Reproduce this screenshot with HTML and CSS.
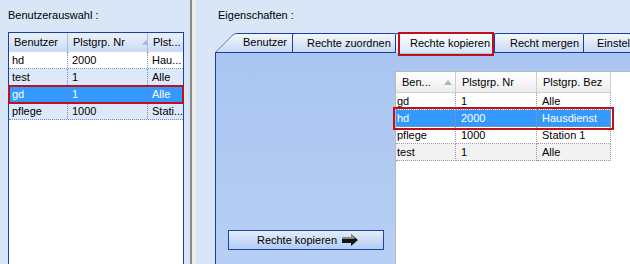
FILE: index.html
```html
<!DOCTYPE html>
<html lang="de">

<head>
    <meta charset="utf-8">
    <meta name="viewport" content="width=device-width, initial-scale=1.0">
    <title>Rechte kopieren</title>
    <link rel="stylesheet" href="styles.css">
</head>

<body>
    <div class="app">
        <section class="pane pane-left">
            <div class="pane-title">Benutzerauswahl :</div>
            <div class="userlist">
                <div class="ul-head">
                    <div class="c1">Benutzer</div>
                    <div class="c2">Plstgrp. Nr
                        <svg class="sort" width="8" height="5" viewBox="0 0 8 5"><path d="M0 5 L4 0 L8 5 Z" fill="#aab9d4"/></svg>
                    </div>
                    <div class="c3">Plst...</div>
                </div>
                <div class="ul-row">
                    <div class="c1">hd</div><div class="c2">2000</div><div class="c3">Hau...</div>
                </div>
                <div class="ul-row alt">
                    <div class="c1">test</div><div class="c2">1</div><div class="c3">Alle</div>
                </div>
                <div class="ul-row sel marked">
                    <div class="c1">gd</div><div class="c2">1</div><div class="c3">Alle</div>
                </div>
                <div class="ul-row alt">
                    <div class="c1">pflege</div><div class="c2">1000</div><div class="c3">Stati...</div>
                </div>
            </div>
        </section>

        <div class="splitter"></div>

        <section class="pane pane-right">
            <div class="pane-title">Eigenschaften :</div>
            <div class="tabstrip">
                <div class="tab tab-first">Benutzer</div>
                <div class="tab tab-2">Rechte zuordnen</div>
                <div class="tab tab-3 tab-sel">Rechte kopieren</div>
                <div class="tab tab-4">Recht mergen</div>
                <div class="tab tab-5">Einstellungen</div>
            </div>
            <div class="tabpanel">
                <div class="tp-side">
                    <button class="btn-copy">Rechte kopieren
                        <svg width="17" height="12" viewBox="0 0 17 12">
                            <path d="M0 3 H9 V0 L16 6 L9 12 V9 H0 Z" fill="#141414"/>
                            <path d="M0 3 H9 V0 L12.5 3 V5 H0 Z" fill="#8a8a8a"/>
                        </svg>
                    </button>
                </div>
                <div class="grid">
                    <div class="g-head">
                        <div class="g1">Ben...
                            <svg class="sort" width="8" height="5" viewBox="0 0 8 5"><path d="M0 5 L4 0 L8 5 Z" fill="#b4b4b4"/></svg>
                        </div>
                        <div class="g2">Plstgrp. Nr</div>
                        <div class="g3">Plstgrp. Bez</div>
                    </div>
                    <div class="g-row">
                        <div class="g1">gd</div><div class="g2">1</div><div class="g3">Alle</div>
                    </div>
                    <div class="g-row sel marked">
                        <div class="g1">hd</div><div class="g2">2000</div><div class="g3">Hausdienst</div>
                    </div>
                    <div class="g-row">
                        <div class="g1">pflege</div><div class="g2">1000</div><div class="g3">Station 1</div>
                    </div>
                    <div class="g-row alt">
                        <div class="g1">test</div><div class="g2">1</div><div class="g3">Alle</div>
                    </div>
                </div>
            </div>
        </section>
    </div>
</body>

</html>
```

FILE: styles.css
```css
body {
    margin: 0;
    padding: 0;
    font-family: "Liberation Sans", Arial, sans-serif;
    font-size: 11px;
    color: #000;
    background-color: #d9e6f8;
    overflow: hidden;
}

.app {
    display: flex;
    width: 630px;
    height: 264px;
}

.pane {
    display: flex;
    flex-direction: column;
}

.pane-title {
    height: 24px;
    padding: 8px 0 0 8px;
    line-height: 14px;
}

/**************** Benutzerauswahl **************/

.pane-left {
    width: 190px;
    flex: none;
}

.userlist {
    flex: 1;
    width: 174px;
    margin-left: 8px;
    border: 1px solid #1a3da6;
    border-bottom: 0;
    background-color: #fff;
}

.ul-head {
    display: flex;
    height: 19px;
    line-height: 19px;
    background: linear-gradient(#eaf1fb, #dce7f8 50%, #c9daf3);
}

.ul-head div {
    box-sizing: border-box;
    padding-left: 5px;
    border-right: 1px solid #a6bce2;
    white-space: nowrap;
    overflow: hidden;
}

.ul-row {
    display: flex;
    height: 16px;
    line-height: 16px;
    border-bottom: 1px dotted #6c8ed6;
}

.ul-row div {
    box-sizing: border-box;
    padding-left: 4px;
    border-right: 1px dotted #6c8ed6;
    white-space: nowrap;
    overflow: hidden;
}

.userlist .c1 {
    width: 59px;
    padding-left: 3px;
}

.ul-head .c1 {
    padding-left: 5px;
}

.userlist .c2 {
    width: 80px;
}

.userlist .c3 {
    width: 35px;
    border-right: 0;
}

.ul-row.alt {
    background-color: #dde9fb;
}

.sort {
    margin-left: 14px;
    vertical-align: 1px;
}

.sel {
    background-color: #3399ff;
    color: #fff;
}

.marked {
    position: relative;
    outline: 2px solid #c0101c;
    outline-offset: -1px;
}

.splitter {
    width: 4px;
    flex: none;
    border-left: 2px solid #8a8a8a;
    background-color: #ebebeb;
}

/**************** Eigenschaften **************/

.pane-right {
    flex: 1;
    min-width: 0;
    padding-left: 19px;
    overflow: hidden;
}

.pane-right .pane-title {
    padding-left: 3px;
}

.tabstrip {
    display: flex;
    height: 19px;
    margin-top: 1px;
}

.tab {
    position: relative;
    flex: none;
    box-sizing: border-box;
    height: 19px;
    line-height: 18px;
    padding-left: 14px;
    border-top: 1px solid #1a3da6;
    border-left: 1px solid #1a3da6;
    border-top-left-radius: 2px;
    background: linear-gradient(#f3f7fd, #dbe7f8 55%, #c8daf5);
    white-space: nowrap;
}

.tab-first {
    z-index: 1;
    width: 77px;
    padding-left: 28px;
    border: 0;
    background: none;
}

.tab-first::before {
    content: "";
    position: absolute;
    z-index: -1;
    left: 0;
    top: 0;
    bottom: 0;
    width: 80px;
    border-top: 1px solid #1a3da6;
    border-left: 1px solid #1a3da6;
    border-top-left-radius: 3px;
    background: linear-gradient(#f3f7fd, #dbe7f8 55%, #c8daf5);
    transform: skewX(-45deg);
    transform-origin: bottom left;
}

.tab-2 {
    z-index: 2;
    width: 103px;
}

.tab-3 {
    z-index: 3;
    width: 99px;
}

.tab-4 {
    z-index: 2;
    width: 89px;
    padding-left: 15px;
}

.tab-5 {
    z-index: 2;
    width: 90px;
    padding-left: 13px;
}

.tab-sel {
    height: 20px;
    background: linear-gradient(#fdfeff, #e8f0fb 60%, #d6e4f8);
}

.tab-sel::after {
    content: "";
    position: absolute;
    left: 2px;
    right: 0;
    top: -2px;
    bottom: -3px;
    border: 2px solid #c0101c;
}

.tabpanel {
    flex: 1;
    display: flex;
    border-top: 1px solid #1a3da6;
    border-left: 1px solid #1a3da6;
    background: linear-gradient(#a9c5f0, #b7cff5);
}

.tp-side {
    width: 179px;
    flex: none;
    display: flex;
    align-items: flex-end;
    padding-bottom: 14px;
}

/******************************* Knap ***************************/

.btn-copy {
    display: flex;
    align-items: center;
    justify-content: center;
    gap: 5px;
    width: 156px;
    height: 20px;
    margin-left: 12px;
    padding: 0 0 0 4px;
    border: 1px solid #1f43a8;
    background: linear-gradient(#e4eefc, #cbdcf7 50%, #b3cbf2);
    font-family: inherit;
    font-size: 11px;
    color: #000;
}

/******************************* Grid ***************************/

.grid {
    flex: 1;
    margin-top: 18px;
    border-top: 1px solid #b9b9b9;
    border-left: 1px solid #b9b9b9;
    background-color: #fff;
}

.g-head,
.g-row {
    display: flex;
    width: 215px;
}

.g-head div {
    box-sizing: border-box;
    height: 21px;
    line-height: 20px;
    padding-left: 6px;
    border-right: 1px solid #cfcfcf;
    border-bottom: 1px solid #cfcfcf;
    background: linear-gradient(#ffffff, #f7f7f7 50%, #ebebeb);
    white-space: nowrap;
}

.g-row div {
    box-sizing: border-box;
    height: 17px;
    line-height: 16px;
    padding-left: 5px;
    border-right: 1px dotted #9a9a9a;
    border-bottom: 1px dotted #9a9a9a;
    white-space: nowrap;
    overflow: hidden;
}

.grid .g1 {
    width: 60px;
}

.g-row .g1 {
    padding-left: 1px;
}

.grid .g2 {
    width: 81px;
}

.grid .g3 {
    width: 74px;
}

.g-head .sort {
    margin-left: 10px;
}

.g-row.alt {
    background-color: #f2f2f2;
}

.g-row.marked {
    outline-offset: 1px;
}
```
